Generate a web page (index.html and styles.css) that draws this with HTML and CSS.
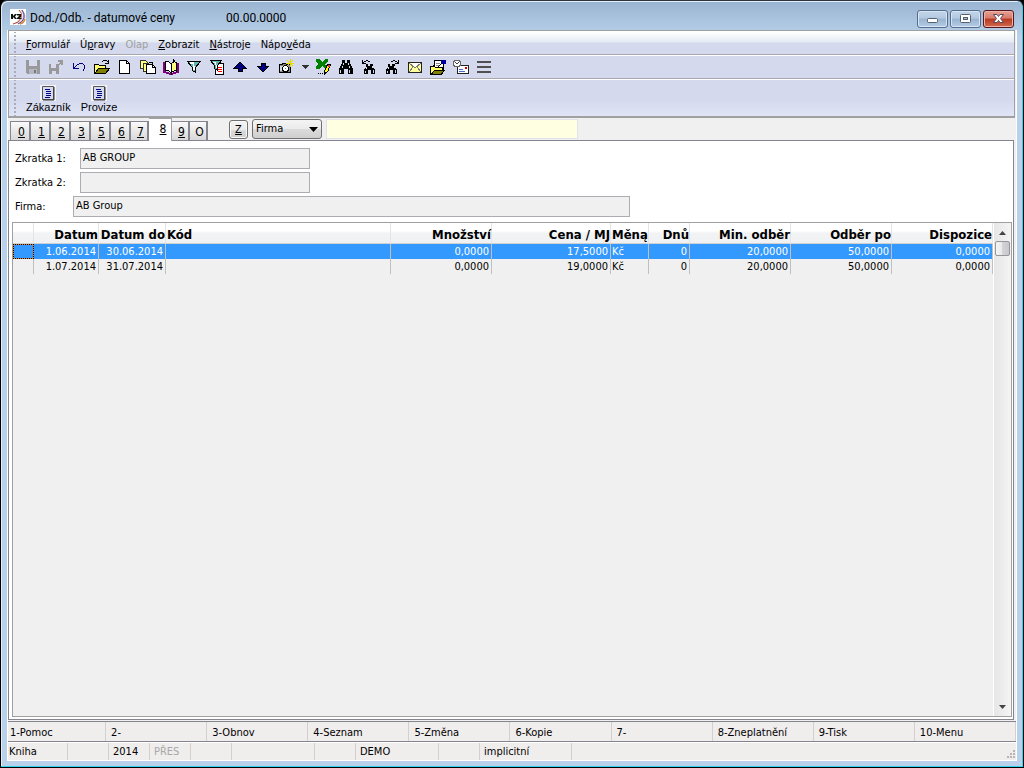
FILE: index.html
```
<!DOCTYPE html>
<html lang="cs">
<head>
    <meta charset="UTF-8">
    <meta name="viewport" content="width=device-width, initial-scale=1.0">
    <title>Dod./Odb. - datumové ceny</title>
    <link rel="stylesheet" href="styles.css">
</head>
<body>
    <div class="window">
        <header class="titlebar">
            <svg class="app-icon" width="16" height="16" viewBox="0 0 16 16">
                <rect width="16" height="16" fill="#fff"/>
                <path d="M9 1Q14 3 12 8Q10 13 2 15H13Q17 10 15 4L12 1Z" fill="#e6d8e8"/>
                <path d="M9 1Q13 4 11 9T3 15" fill="none" stroke="#b0452c"/>
                <path d="M12 1Q15 5 14 9T8 15" fill="none" stroke="#4c3b7c"/>
                <path d="M15 10Q14 14 10 15" fill="none" stroke="#e08a3c" stroke-width="1.5"/>
                <path d="M1 5H3V7L5 5H7L5 7.500L7 10H5L3 8V10H1ZM7 5H11V8L9.500 9H11.500V10H7V9L9.500 6.500H7Z" fill="#111"/>
            </svg>
            <h1 class="title">Dod./Odb. - datumové ceny</h1>
            <span class="title-date">00.00.0000</span>
            <div class="window-buttons">
                <button class="win-button" aria-label="Minimalizovat">
                    <svg width="29" height="15" viewBox="0 0 29 15"><rect x="9.500" y="7.500" width="10" height="4" rx="1" fill="#fff" stroke="#55606e"/></svg>
                </button>
                <button class="win-button" aria-label="Maximalizovat">
                    <svg width="29" height="15" viewBox="0 0 29 15"><rect x="9.500" y="3.500" width="10" height="8" rx="1" fill="#fff" stroke="#55606e"/><rect x="12.500" y="6.500" width="4" height="2" fill="#9db8d5" stroke="#55606e"/></svg>
                </button>
                <button class="win-button close" aria-label="Zavřít">
                    <svg width="29" height="15" viewBox="0 0 29 15"><path d="M9.500 3.500H13L14.500 5.500L16 3.500H19.500L16.500 7.500L19.500 11.500H16L14.500 9.500L13 11.500H9.500L12.500 7.500Z" fill="#fff" stroke="#5c4a58"/></svg>
                </button>
            </div>
        </header>

        <div class="content">
            <div class="bars">
                <nav class="bar menu">
                    <a href="#"><u>F</u>ormulář</a>
                    <a href="#">Ú<u>p</u>ravy</a>
                    <a href="#" class="disabled">Olap</a>
                    <a href="#"><u>Z</u>obrazit</a>
                    <a href="#"><u>N</u>ástroje</a>
                    <a href="#">Nápo<u>v</u>ěda</a>
                </nav>

                <div class="bar tools">
                    <button class="tool" aria-label="Uložit">
                        <svg viewBox="0 0 16 16"><path d="M1 1H15V15H2L1 14Z" fill="#999"/><path d="M4 1H12V7H4Z" fill="#d5daee"/><path d="M4 10H12V15H4Z" fill="#b5b8c4"/><path d="M9 11H11V14H9Z" fill="#777"/></svg>
                    </button>
                    <button class="tool" aria-label="Uložit a zavřít">
                        <svg viewBox="0 0 16 16"><path d="M1 5H11V15H1Z" fill="#999"/><path d="M3 5H8V9H3Z" fill="#d5daee"/><path d="M4 12H8V15H4Z" fill="#d5daee"/><path d="M10 1H15V6H13V4L9 8L8 7L12 3H10Z" fill="#999"/></svg>
                    </button>
                    <button class="tool" aria-label="Zpět">
                        <svg viewBox="0 0 16 16"><path d="M2.500 4V9.500H8M3 9L6 6Q9 4 12 5Q15 7 13 10L12 12" fill="none" stroke="#000080"/></svg>
                    </button>
                    <button class="tool" aria-label="Otevřít">
                        <svg viewBox="0 0 16 16"><path d="M.500 14.500V5.500H4.500L5.500 6.500H11.500V9" fill="#ffff66" stroke="#000"/><path d="M1 14.500L4.500 9.500H15.500L11.500 14.500Z" fill="#808000" stroke="#000"/><path d="M8 3Q11 0 14 3M14.500 1V4.500H11" fill="none" stroke="#000"/></svg>
                    </button>
                    <button class="tool" aria-label="Nový">
                        <svg viewBox="0 0 16 16"><path d="M2.500 1.500H9.500L12.500 4.500V14.500H2.500Z" fill="#fff" stroke="#000"/><path d="M9.500 1.500V4.500H12.500" fill="none" stroke="#000"/></svg>
                    </button>
                    <button class="tool" aria-label="Kopie">
                        <svg viewBox="0 0 16 16"><path d="M.500 1.500H5.500L7.500 3.500V9.500H.500Z" fill="#ffff80" stroke="#333"/><path d="M3.500 4.500H8.500V12.500H3.500Z" fill="#ffff80" stroke="#333"/><path d="M6.500 5.500H12.500L15.500 8.500V14.500H6.500Z" fill="#fff" stroke="#000"/><path d="M8.500 3.500H12V6M12.500 5.500V8.500H15.500" fill="none" stroke="#000"/></svg>
                    </button>
                    <button class="tool" aria-label="Kniha">
                        <svg viewBox="0 0 16 16"><path d="M1 3V13L8 15L15 13V4" fill="none" stroke="#800080" stroke-width="2"/><path d="M2.500 2.500Q6 2 8 5V14Q6 11 2.500 11.500Z" fill="#fff" stroke="#000"/><path d="M8 5L10.500 3V1L12 3H13.500V12Q10 11 8 14Z" fill="#ffff80" stroke="#000"/></svg>
                    </button>
                    <button class="tool" aria-label="Filtr">
                        <svg viewBox="0 0 16 16"><path d="M1.500 2.500H14.500L9.500 8.500V13.500L6.500 11.500V8.500Z" fill="#63b5b5" stroke="#000"/><path d="M4 4H7L8 8V11" fill="none" stroke="#fff" stroke-width="1.500"/></svg>
                    </button>
                    <button class="tool" aria-label="Filtr záznamů">
                        <svg viewBox="0 0 16 16"><path d="M6.500 4.500H14.500V15.500H6.500Z" fill="#fff" stroke="#000"/><path d="M9 8.500H13M9 10.500H13M9 12.500H13" stroke="#f00"/><path d="M1.500 1.500H12.500L8.500 6.500V11.500L5.500 9.500V6.500Z" fill="#63b5b5" stroke="#000"/><path d="M4 3H6L7 6V9" fill="none" stroke="#fff"/></svg>
                    </button>
                    <button class="tool" aria-label="Nahoru">
                        <svg viewBox="0 0 16 16"><path d="M8 3L14 9H10V12H6V9H2Z" fill="#000080" stroke="#000"/></svg>
                    </button>
                    <button class="tool" aria-label="Dolů">
                        <svg viewBox="0 0 16 16"><path d="M8 13L14 7H10V4H6V7H2Z" fill="#000080" stroke="#000"/></svg>
                    </button>
                    <button class="tool" aria-label="Snímek">
                        <svg viewBox="0 0 16 16"><path d="M1.500 5.500H4.500V4H8V5.500H12.500V13.500H1.500Z" fill="#888" stroke="#000"/><path d="M2 7H5V12H2Z" fill="#d8d8d8"/><circle cx="7.500" cy="9.500" r="3" fill="#fff" stroke="#000"/><circle cx="7.500" cy="9.500" r="1" fill="#39a0a0"/><path d="M12 0V8M8 4H16M9 1L15 7M15 1L9 7" stroke="#e8d800"/></svg>
                    </button>
                    <button class="tool narrow" aria-label="Další">
                        <svg viewBox="0 0 14 16"><path d="M4 6H11L7.500 10Z" fill="#333"/></svg>
                    </button>
                    <button class="tool" aria-label="Export">
                        <svg viewBox="0 0 16 16"><path d="M1 0H5L7 3L10 0H13V3L10 5L13 9H9L7 7L4 10H1V7L4 5L1 3Z" fill="#008000"/><path d="M9.500 12L12.500 5.500H15.500L13 12L9.500 15Z" fill="#ff0" stroke="#000"/><path d="M13 6H15V8H13Z" fill="#e03030"/><path d="M3 14.500H9" stroke="#000" stroke-dasharray="1 1"/></svg>
                    </button>
                    <button class="tool" aria-label="Hledat">
                        <svg viewBox="0 0 16 16"><path d="M4 1H7V4H9V1H12V4L15 10V15H10V10H6V15H1V10L4 4Z" fill="#000"/><path d="M5.500 4V6M4.500 7V9M10.500 4V6M11.500 7V9M2.500 11V14M11.500 11V14" stroke="#d5daee"/></svg>
                    </button>
                    <button class="tool" aria-label="Hledat předchozí">
                        <svg viewBox="0 0 16 16"><path d="M5 5H7V7H9V5H12V8L14 11V15H10V11H7V15H3V11L5 8Z" fill="#000"/><path d="M5.500 8V10M11.500 7V9M12.500 11V14M4.500 12V14" stroke="#d5daee"/><path d="M2 4Q5 0 9 3M1.500 1V4.500H5" fill="none" stroke="#000"/></svg>
                    </button>
                    <button class="tool" aria-label="Hledat další">
                        <svg viewBox="0 0 16 16"><path d="M4 5H6V7H8V5H11V8L13 11V15H9V11H6V15H2V11L4 8Z" fill="#000"/><path d="M4.500 8V10M10.500 7V9M11.500 11V14M3.500 12V14" stroke="#d5daee"/><path d="M7 3Q11 0 14 4M14.500 1V4.500H11" fill="none" stroke="#000"/></svg>
                    </button>
                    <button class="tool" aria-label="Pošta">
                        <svg viewBox="0 0 16 16"><path d="M1.500 3.500H14.500V13.500H1.500Z" fill="#ffff99" stroke="#222"/><path d="M2 4L8 9L14 4M2 13L6 8M14 13L10 8" fill="none" stroke="#777"/><path d="M4 4H12L8 8Z" fill="#fff"/></svg>
                    </button>
                    <button class="tool" aria-label="Poznámky">
                        <svg viewBox="0 0 16 16"><path d="M4.500 1.500H13.500V10L10 12H3.500Z" fill="#fff" stroke="#000"/><path d="M6 4.500H10M6 6.500H9" stroke="#888"/><path d="M.500 7.500H4.500L5.500 8.500H12.500V12L9 15.500H.500Z" fill="#ffff66" stroke="#000"/><path d="M1 15.500L4.500 11.500H14.500L11 15.500Z" fill="#808000" stroke="#000"/><path d="M8 8L12 4" stroke="#000"/><path d="M11 1H16V5H13L11 4Z" fill="#0000a0"/></svg>
                    </button>
                    <button class="tool" aria-label="Odeslat">
                        <svg viewBox="0 0 16 16"><path d="M4.500 6.500H15.500V14.500H4.500Z" fill="#fff" stroke="#222"/><path d="M6 10.500H10M6 12.500H12" stroke="#4668c8"/><path d="M12 8H14V10H12Z" fill="#d00000"/><circle cx="4" cy="4.500" r="3.500" fill="#fff" stroke="#666"/><path d="M2 3L4 5L6 3" fill="none" stroke="#444"/></svg>
                    </button>
                    <button class="tool" aria-label="Seznam">
                        <svg viewBox="0 0 16 16"><path d="M1 3H15M1 8H15M1 13H15" stroke="#505050" stroke-width="2"/></svg>
                    </button>
                </div>

                <div class="bar shortcuts">
                    <button class="shortcut">
                        <svg width="16" height="16" viewBox="0 0 16 16"><path d="M0 0H16V16H0Z" fill="#f4f4f6"/><path d="M2.500 1.500H13.500V14.500H2.500Z" fill="#d5daee" stroke="#555"/><path d="M14 2V15H3" fill="none" stroke="#333"/><path d="M5 4.500H10M6 6.500H11M6 8.500H11M6 10.500H11M5 12.500H10" stroke="#000080"/></svg>
                        Zákazník
                    </button>
                    <button class="shortcut">
                        <svg width="16" height="16" viewBox="0 0 16 16"><path d="M0 0H16V16H0Z" fill="#f4f4f6"/><path d="M2.500 1.500H13.500V14.500H2.500Z" fill="#d5daee" stroke="#555"/><path d="M14 2V15H3" fill="none" stroke="#333"/><path d="M5 4.500H10M6 6.500H11M6 8.500H11M6 10.500H11M5 12.500H10" stroke="#000080"/></svg>
                        Provize
                    </button>
                </div>
            </div>

            <div class="tab-strip">
                <div class="tabs">
                    <button class="tab"><u>0</u></button>
                    <button class="tab"><u>1</u></button>
                    <button class="tab"><u>2</u></button>
                    <button class="tab"><u>3</u></button>
                    <button class="tab"><u>5</u></button>
                    <button class="tab"><u>6</u></button>
                    <button class="tab"><u>7</u></button>
                    <button class="tab active"><u>8</u></button>
                    <button class="tab"><u>9</u></button>
                    <button class="tab">O</button>
                </div>
                <button class="z-button"><u>Z</u></button>
                <div class="picker">
                    <select aria-label="Třídění">
                        <option>Firma</option>
                    </select>
                    <svg width="9" height="5" viewBox="0 0 9 5"><path d="M0 0H9L4.500 5Z" fill="#000"/></svg>
                </div>
                <input class="search" type="text" aria-label="Hledání">
            </div>

            <main class="page">
                <form class="fields">
                    <div class="field">
                        <label for="zkratka1">Zkratka 1:</label>
                        <input id="zkratka1" type="text" value="AB GROUP" readonly>
                    </div>
                    <div class="field">
                        <label for="zkratka2">Zkratka 2:</label>
                        <input id="zkratka2" type="text" readonly>
                    </div>
                    <div class="field company">
                        <label for="firma">Firma:</label>
                        <input id="firma" type="text" value="AB Group" readonly>
                    </div>
                </form>

                <div class="grid">
                    <div class="grid-body">
                        <table>
                            <colgroup>
                                <col class="col-mark">
                                <col class="col-from">
                                <col class="col-to">
                                <col>
                                <col class="col-number">
                                <col class="col-price">
                                <col class="col-currency">
                                <col class="col-days">
                                <col class="col-number">
                                <col class="col-number">
                                <col class="col-number">
                            </colgroup>
                            <thead>
                                <tr>
                                    <th></th>
                                    <th>Datum</th>
                                    <th>Datum do</th>
                                    <th class="left">Kód</th>
                                    <th>Množství</th>
                                    <th>Cena / MJ</th>
                                    <th class="left">Měną</th>
                                    <th>Dnů</th>
                                    <th>Min. odběr</th>
                                    <th>Odběr po</th>
                                    <th>Dispozice</th>
                                </tr>
                            </thead>
                            <tbody>
                                <tr class="selected">
                                    <td class="mark"></td>
                                    <td>1.06.2014</td>
                                    <td>30.06.2014</td>
                                    <td></td>
                                    <td>0,0000</td>
                                    <td>17,5000</td>
                                    <td class="left">Kč</td>
                                    <td>0</td>
                                    <td>20,0000</td>
                                    <td>50,0000</td>
                                    <td>0,0000</td>
                                </tr>
                                <tr>
                                    <td></td>
                                    <td>1.07.2014</td>
                                    <td>31.07.2014</td>
                                    <td></td>
                                    <td>0,0000</td>
                                    <td>19,0000</td>
                                    <td class="left">Kč</td>
                                    <td>0</td>
                                    <td>20,0000</td>
                                    <td>50,0000</td>
                                    <td>0,0000</td>
                                </tr>
                            </tbody>
                        </table>
                    </div>
                    <div class="scrollbar">
                        <button class="scroll-arrow" aria-label="Posunout nahoru"><svg width="7" height="4" viewBox="0 0 7 4"><path d="M0 4L3.500 0L7 4Z" fill="#444"/></svg></button>
                        <div class="thumb"></div>
                        <button class="scroll-arrow last" aria-label="Posunout dolů"><svg width="7" height="4" viewBox="0 0 7 4"><path d="M0 0H7L3.500 4Z" fill="#444"/></svg></button>
                    </div>
                </div>
            </main>

            <div class="function-keys">
                <button>1-Pomoc</button>
                <button>2-</button>
                <button>3-Obnov</button>
                <button>4-Seznam</button>
                <button>5-Změna</button>
                <button>6-Kopie</button>
                <button>7-</button>
                <button>8-Zneplatnění</button>
                <button>9-Tisk</button>
                <button>10-Menu</button>
            </div>

            <footer class="status">
                <span class="cell book">Kniha</span>
                <span class="cell"></span>
                <span class="cell">2014</span>
                <span class="cell muted">PŘES</span>
                <span class="cell"></span>
                <span class="cell wide"></span>
                <span class="cell"></span>
                <span class="cell wide">DEMO</span>
                <span class="cell"></span>
                <span class="cell wider">implicitní</span>
                <svg class="grip" width="10" height="10" viewBox="0 0 10 10"><path d="M7 1H9M4 4H6M7 4H9M1 7H3M4 7H6M7 7H9" stroke="#b8b4b4" stroke-width="2"/></svg>
            </footer>
        </div>
    </div>
</body>
</html>
```
FILE: styles.css
```
* {
    box-sizing: border-box;
}

body {
    margin: 0;
    background-color: #000;
    font-family: "DejaVu Sans Condensed", "DejaVu Sans", sans-serif;
    font-size: 11px;
    line-height: 14px;
    color: #000;
}

button, input, select {
    font: inherit;
    color: inherit;
    margin: 0;
    padding: 0;
    border: none;
    border-radius: 0;
    background: none;
}

a {
    color: inherit;
    text-decoration: none;
}

u {
    text-underline-offset: 1px;
}

/* window frame */
.window {
    display: flex;
    flex-direction: column;
    min-height: 100vh;
    padding: 0 6px 6px;
    border: 1px solid #000;
    border-top-color: #2c3440;
    border-radius: 7px 7px 0 0;
    background: linear-gradient(#99b4d1, #b9d1ea 36px, #b9d1ea);
    box-shadow: inset -1px -1px 0 #2bd5ee, inset 1px 1px 0 #e4eef8;
}

.titlebar {
    display: flex;
    height: 29px;
    padding: 8px 3px 0;
    font-family: Roboto, sans-serif;
    font-size: 12px;
    line-height: 18px;
}

.title {
    width: 196px;
    margin: 0 0 0 4px;
    font-size: 12px;
    font-weight: normal;
    white-space: nowrap;
}

.window-buttons {
    display: flex;
    gap: 2px;
    margin-left: auto;
}

.win-button {
    display: flex;
    width: 31px;
    height: 18px;
    margin-top: 1px;
    border: 1px solid #566c8c;
    border-radius: 3px;
    background: linear-gradient(#c3d5e9, #b3c9e1 45%, #98b3d1 50%, #b4cde6);
    box-shadow: inset 0 0 0 1px #d8e5f2;
}

.win-button.close {
    border-color: #5a1420;
    background: linear-gradient(#e6a397, #d4796a 45%, #b8371f 50%, #d2694f);
    box-shadow: inset 0 0 0 1px #eab4a8;
}

.content {
    display: flex;
    flex: 1;
    flex-direction: column;
    border: 1px solid #fff;
    border-top: none;
    background-color: #f0f0f0;
}

/* menu and toolbars */
.bars {
    border: 1px solid #a0a0a0;
    border-width: 1px 1px 2px;
    margin-right: 1px;
    background-color: #d4d9ed;
}

.bar {
    display: flex;
    align-items: center;
    height: 24px;
    padding-left: 17px;
    border-top: 1px solid #fff;
    border-bottom: 1px solid #a8a8ac;
    background: radial-gradient(circle, #a9adba 1px, transparent 1px) 4px 2px / 4px 4px repeat-y;
}

.menu {
    gap: 10px;
    padding-top: 4px;
    background: radial-gradient(circle, #a9adba 1px, transparent 1px) 4px 2px / 4px 4px repeat-y, linear-gradient(#fff, #e4ebf3 10px, #d4d9ed 11px);
}

.disabled {
    color: #a0a0a0;
}

.tools {
    padding-left: 13px;
}

.tool {
    width: 23px;
    height: 20px;
    padding: 2px 3px;
}

.tool svg {
    display: block;
    width: 16px;
    height: 16px;
    shape-rendering: crispEdges;
}

.tool.narrow {
    width: 14px;
    padding: 2px 0;
}

.tool.narrow svg {
    width: 14px;
}

.shortcuts {
    gap: 10px;
    height: 37px;
    border-bottom: none;
    background: radial-gradient(circle, #a9adba 1px, transparent 1px) 4px 2px / 4px 4px repeat-y, linear-gradient(#d4d9ed 20px, #dfe4f6);
}

.shortcut {
    display: flex;
    flex-direction: column;
    align-items: center;
    padding-top: 2px;
    font-family: "Liberation Sans", Arial, sans-serif;
    line-height: 13px;
}

/* tabs */
.tab-strip {
    display: flex;
    height: 22px;
    padding-left: 2px;
}

.tabs {
    display: flex;
    align-items: flex-end;
    width: 219px;
}

.tab {
    width: 20px;
    height: 19px;
    padding: 2px 0 0 3px;
    border: solid #85858f;
    border-width: 1px 2px 0 0;
    background: linear-gradient(#fafafa, #d8d8d8);
    font-size: 12px;
}

.tab:first-child {
    width: 21px;
    border-left-width: 1px;
}

.tab.active {
    width: 23px;
    height: 22px;
    padding: 0 0 2px 6px;
    border-color: #a0a0a8;
    border-right-width: 1px;
    background: #fff;
}

.tab:nth-child(7), .tab:nth-child(9), .tab:nth-child(10) {
    width: 18px;
}

/* the active tab covers the top edge of the page */
.tab.active {
    height: 23px;
    margin-bottom: -1px;
    z-index: 1;
}

.z-button {
    width: 19px;
    height: 19px;
    margin: 2px 4px 0 0;
    border: 1px solid #707070;
    border-radius: 3px;
    background: linear-gradient(#f4f4f4, #ebebeb 50%, #dcdcdc 50%, #cfcfcf);
    box-shadow: inset 0 0 0 1px #fafafa;
}

.picker {
    display: grid;
    grid-template-columns: 1fr 13px;
    align-items: center;
    width: 70px;
    height: 20px;
    margin-top: 1px;
}

.picker select {
    grid-area: 1 / 1 / 2 / 3;
    height: 20px;
    padding-left: 3px;
    appearance: none;
    border: 1px solid #707070;
    border-radius: 3px;
    background: linear-gradient(#f4f4f4, #ebebeb 50%, #dcdcdc 50%, #cfcfcf);
}

.picker svg {
    grid-area: 1 / 2;
    pointer-events: none;
}

.search {
    width: 252px;
    height: 20px;
    margin: 1px 0 0 4px;
    padding: 0 4px;
    border: 1px solid #e2e3ea;
    background-color: #ffffe1;
}

/* record */
.page {
    display: flex;
    flex: 1;
    flex-direction: column;
    margin: 0 2px 0 0;
    padding: 7px 1px 2px 3px;
    border: 1px solid #85858f;
    background-color: #fff;
}

.fields {
    display: flex;
    flex-direction: column;
    gap: 3px;
    padding: 0 3px;
    margin-bottom: 5px;
}

.field {
    display: flex;
    align-items: center;
}

.field label {
    width: 65px;
}

.field input {
    width: 230px;
    height: 21px;
    padding: 0 2px 2px;
    border: 1px solid #abadb3;
    background-color: #f0f0f0;
}

.company label {
    width: 58px;
}

.company input {
    width: 557px;
}

/* price table */
.grid {
    display: flex;
    flex: 1;
    border: 1px solid #a0a0a0;
    background-color: #f0f0f0;
}

.grid-body {
    flex: 1;
}

table {
    width: 100%;
    table-layout: fixed;
    border-collapse: separate;
    border-spacing: 0;
}

.col-mark {
    width: 21px;
}

.col-from {
    width: 65px;
}

.col-to {
    width: 67px;
}

.col-number {
    width: 101px;
}

.col-price {
    width: 119px;
}

.col-currency {
    width: 38px;
}

.col-days {
    width: 41px;
}

th {
    height: 21px;
    padding: 3px 0 0;
    border-right: 1px solid #e4e4e4;
    border-bottom: 1px solid #d0d0d0;
    background: linear-gradient(#fff, #fff 40%, #f2f3f5 50%, #f0f1f3);
    font-size: 13px;
    line-height: 16px;
    text-align: right;
    white-space: nowrap;
}

td {
    height: 15px;
    padding: 0 2px;
    border-right: 1px solid #c0c0c0;
    line-height: 15px;
    text-align: right;
    white-space: nowrap;
}

th.left, td.left {
    padding-left: 1px;
    text-align: left;
}

.selected td {
    background-color: #3399ff;
    color: #fff;
}

.selected .mark {
    border: 1px dotted #000;
    background: linear-gradient(#3399ff, #3399ff) padding-box, #e08020;
}

.scrollbar {
    display: flex;
    flex-direction: column;
    width: 18px;
    padding: 1px;
    border-left: 1px solid #fff;
    background: linear-gradient(90deg, #e6e6e6, #f4f4f4);
}

.scroll-arrow {
    display: flex;
    align-items: center;
    justify-content: center;
    height: 17px;
}

.scroll-arrow.last {
    margin-top: auto;
}

.thumb {
    height: 15px;
    border: 1px solid #979797;
    border-radius: 2px;
    background: linear-gradient(90deg, #f5f5f5, #e9e9eb 50%, #d4d4d8 50%, #c8c8cc);
}

/* bottom bars */
.function-keys {
    display: flex;
    height: 21px;
    margin-top: 1px;
    border-top: 1px solid #85858f;
    border-bottom: 1px solid #85858f;
    background-color: #f0eded;
}

.function-keys button {
    flex: 1;
    padding: 3px 0 0 5px;
    border-right: 1px solid #d4d0d0;
    text-align: left;
}

.function-keys button:first-child {
    padding-left: 2px;
}

.status {
    display: flex;
    height: 18px;
    border-top: 1px solid #fff;
    background-color: #f0eded;
}

.cell {
    width: 41px;
    padding: 2px 0 0 4px;
    border-right: 1px solid #d4d0d0;
}

.cell.book {
    width: 60px;
    padding-left: 1px;
}

.cell.wide {
    width: 83px;
}

.cell.wider {
    width: 92px;
}

.muted {
    color: #a8a8a8;
}

.grip {
    align-self: flex-end;
    margin-left: auto;
}
```
